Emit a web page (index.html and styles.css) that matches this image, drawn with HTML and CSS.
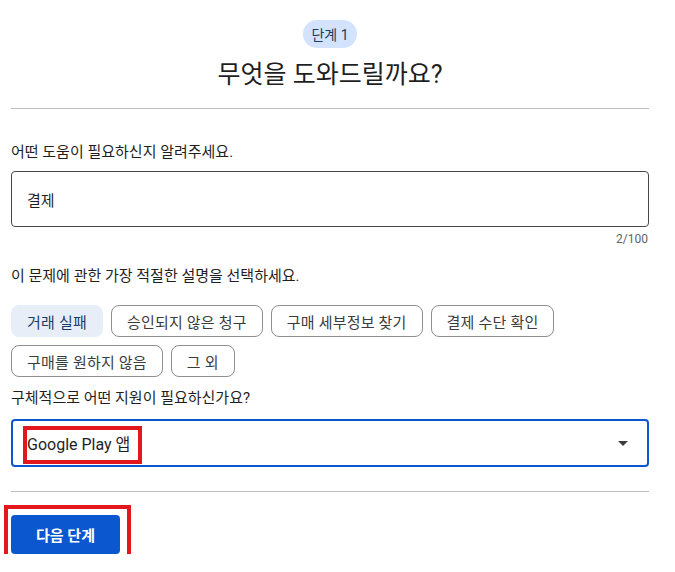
FILE: index.html
```html
<!DOCTYPE html>
<html lang="ko">
<head>
<meta charset="utf-8">
<link rel="stylesheet" href="styles.css">
</head>
<body>
<div class="page">
  <div class="head">
    <span class="badge">단계 1</span>
    <h1 class="title">무엇을 도와드릴까요?</h1>
  </div>
  <div class="rule"></div>

  <div class="label label-first">어떤 도움이 필요하신지 알려주세요.</div>
  <div class="input">결제</div>
  <div class="counter">2/100</div>

  <div class="label label-second">이 문제에 관한 가장 적절한 설명을 선택하세요.</div>
  <div class="chips">
    <span class="chip chip-selected">거래 실패</span>
    <span class="chip">승인되지 않은 청구</span>
    <span class="chip">구매 세부정보 찾기</span>
    <span class="chip">결제 수단 확인</span>
    <span class="chip">구매를 원하지 않음</span>
    <span class="chip">그 외</span>
  </div>

  <div class="label label-third">구체적으로 어떤 지원이 필요하신가요?</div>
  <div class="select">
    <span class="select-text">Google Play 앱</span>
    <svg class="caret" width="10" height="5" viewBox="0 0 10 5"><path d="M0 0h10L5 5z" fill="#3c3c3c"/></svg>
    <span class="mark mark-select"></span>
  </div>

  <div class="rule rule-bottom"></div>

  <div class="actions">
    <button class="btn">다음 단계</button>
    <span class="mark mark-btn"></span>
  </div>
</div>
</body>
</html>
```

FILE: styles.css
```css
* { box-sizing: border-box; }
html, body { margin: 0; padding: 0; background: #fff; }
body {
  font-family: Roboto, "Noto Sans CJK KR", sans-serif;
  color: #1f1f1f;
}
.page {
  width: 638px;
  margin-left: 11px;
  padding-top: 20px;
}
.head {
  display: flex;
  flex-direction: column;
  align-items: center;
}
.badge {
  display: inline-flex;
  align-items: center;
  height: 28px;
  padding: 0 8px;
  border-radius: 14px;
  background: #d3e3fd;
  color: #213a5e;
  font-size: 14px;
}
.title {
  margin: 11px 0 0;
  font-size: 25px;
  font-weight: 400;
  line-height: 32px;
  color: #1f1f1f;
}
.rule {
  height: 1px;
  background: #bdbdbd;
  margin-top: 17px;
}
.label {
  font-size: 15px;
  line-height: 20px;
  color: #1f1f1f;
}
.label-first { margin-top: 33px; }
.label-second { margin-top: 19px; }
.label-third { margin-top: 11px; }
.input {
  margin-top: 9px;
  height: 56px;
  border: 1px solid #474747;
  border-radius: 4px;
  padding-left: 15px;
  display: flex;
  align-items: center;
  font-size: 15px;
  color: #1f1f1f;
}
.counter {
  margin-top: 4px;
  text-align: right;
  font-size: 12px;
  line-height: 16px;
  color: #5f6368;
  padding-right: 1px;
}
.chips {
  margin-top: 19px;
  display: flex;
  flex-wrap: wrap;
  gap: 8px 8px;
  width: 560px;
}
.chip {
  height: 32px;
  padding: 0 15px;
  border: 1px solid #8e8e8e;
  border-radius: 8px;
  display: inline-flex;
  align-items: center;
  font-size: 15px;
  letter-spacing: 0.2px;
  color: #3c3c3c;
}
.chip-selected {
  background: #e8eef8;
  border-color: #e8eef8;
  color: #1b3a6b;
}
.select {
  position: relative;
  margin-top: 11px;
  height: 48px;
  border: 2px solid #0b57d0;
  border-radius: 4px;
  display: flex;
  align-items: center;
  justify-content: space-between;
  padding: 0 19px 0 14px;
}
.select-text {
  font-size: 16px;
  color: #1f1f1f;
}
.caret { display: block; }
.mark {
  position: absolute;
  border: 4px solid #e3181f;
  pointer-events: none;
}
.mark-select {
  left: 10px;
  top: 5px;
  width: 119px;
  height: 38px;
}
.rule-bottom { margin-top: 24px; }
.actions {
  position: relative;
  margin-top: 23px;
}
.btn {
  display: block;
  width: 109px;
  height: 39px;
  border: none;
  border-radius: 4px;
  background: #0b57d0;
  color: #fff;
  font-family: Roboto, "Noto Sans CJK KR", sans-serif;
  font-size: 15px;
  font-weight: 700;
  padding: 0;
}
.mark-btn {
  left: -7px;
  top: -10px;
  width: 127px;
  height: 58px;
}
```
